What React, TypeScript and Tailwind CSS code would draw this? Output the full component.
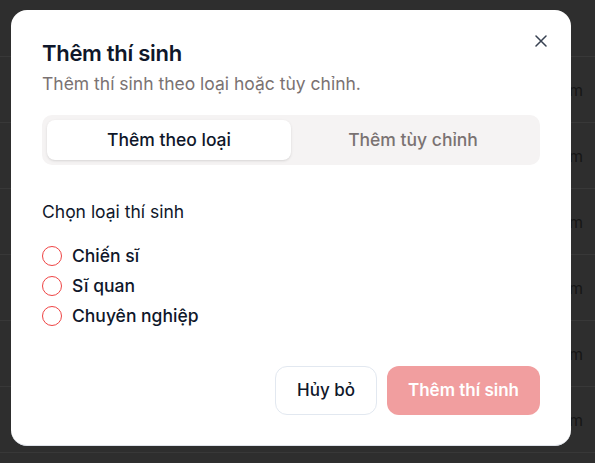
import React from "react";

const rows = [0, 1, 2, 3, 4, 5];

function Radio({ label }: { label: string }) {
  return (
    <label className="flex items-center gap-[10px] h-[30px]">
      <span className="w-[20px] h-[20px] rounded-full border border-[#ef4444] bg-white shrink-0" />
      <span className="text-[17.5px] text-[#0f172a] font-medium">{label}</span>
    </label>
  );
}

export default function App() {
  return (
    <div
      className="relative w-[595px] h-[463px] overflow-hidden bg-[#2e2e2e]"
      style={{ fontFamily: "Inter, 'Noto Sans', sans-serif" }}
    >
      <div className="flex flex-col">
        <div className="h-[57px] border-b border-[#383838]" />
        {rows.map((r) => (
          <div
            key={r}
            className="h-[66px] border-b border-[#383838] flex items-center justify-end pr-[12px] text-[16px] text-[#161616]"
          >
            Thêm
          </div>
        ))}
      </div>

      <div className="absolute left-[11px] top-[10px] w-[560px] h-[436px] bg-white rounded-2xl border-b border-[#dfe3ea] px-[31px] pt-[29px] flex flex-col">
        <button className="absolute right-[20px] top-[21px] w-[20px] h-[20px] flex items-center justify-center text-[#374151]">
          <svg width="12" height="12" viewBox="0 0 12 12" fill="none" stroke="currentColor" strokeWidth="1.5" strokeLinecap="round">
            <path d="M1 1L11 11M11 1L1 11" />
          </svg>
        </button>

        <h2 className="text-[22px] leading-[28px] font-semibold text-[#0f172a] tracking-[-0.3px]">
          Thêm thí sinh
        </h2>
        <p className="mt-[5px] text-[17.5px] leading-[24px] text-[#7a7272]">
          Thêm thí sinh theo loại hoặc tùy chỉnh.
        </p>

        <div className="mt-[19px] h-[50px] rounded-[10px] bg-[#f5f3f3] p-[5px] grid grid-cols-2">
          <div className="rounded-[8px] bg-white shadow-sm flex items-center justify-center text-[17.5px] font-medium text-[#0f172a]">
            Thêm theo loại
          </div>
          <div className="flex items-center justify-center text-[17.5px] font-medium text-[#7a7272]">
            Thêm tùy chỉnh
          </div>
        </div>

        <div className="mt-[35px] text-[17.5px] leading-[24px] text-[#0f172a]">
          Chọn loại thí sinh
        </div>
        <div className="mt-[17px] flex flex-col">
          <Radio label="Chiến sĩ" />
          <Radio label="Sĩ quan" />
          <Radio label="Chuyên nghiệp" />
        </div>

        <div className="mt-auto mb-[30px] flex justify-end gap-[10px]">
          <button className="h-[49px] px-[21px] rounded-xl border border-[#e2e8f0] bg-white text-[17px] font-medium text-[#0f172a]">
            Hủy bỏ
          </button>
          <button className="h-[49px] w-[153px] rounded-xl bg-[#f19e9f] text-[17px] font-semibold text-white">
            Thêm thí sinh
          </button>
        </div>
      </div>
    </div>
  );
}
